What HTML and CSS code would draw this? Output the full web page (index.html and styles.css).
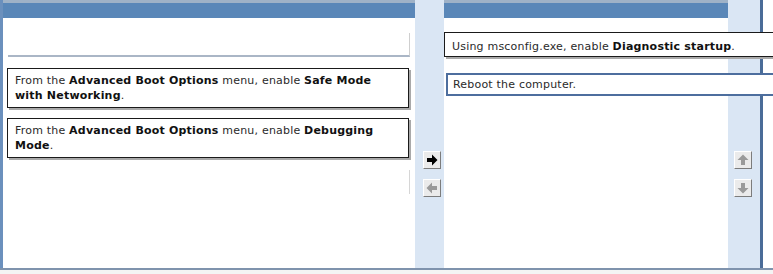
FILE: index.html
```html
<!DOCTYPE html>
<html>
<head>
<meta charset="utf-8">
<link rel="stylesheet" href="styles.css">
</head>
<body>
<div class="app">
  <div class="pane pane-left">
    <div class="head"></div>
    <div class="list">
      <div class="item item-empty"></div>
      <div class="item">From the <b>Advanced Boot Options</b> menu, enable <b>Safe Mode</b> <b>with Networking</b>.</div>
      <div class="item">From the <b>Advanced Boot Options</b> menu, enable <b>Debugging</b> <b>Mode</b>.</div>
      <div class="ghost"></div>
    </div>
  </div>
  <div class="gutter gutter-mid">
    <button class="btn" aria-label="Add">
      <svg width="12" height="12" viewBox="0 0 12 12"><polygon points="1,4 6,4 6,0.5 11.5,6 6,11.5 6,8 1,8" fill="#000"/></svg>
    </button>
    <button class="btn" aria-label="Remove">
      <svg width="12" height="12" viewBox="0 0 12 12"><polygon points="11,4 6,4 6,0.5 0.5,6 6,11.5 6,8 11,8" fill="#9a9a9a"/></svg>
    </button>
  </div>
  <div class="pane pane-right">
    <div class="head"></div>
    <div class="list list-right">
      <div class="item item-wide">Using msconfig.exe, enable <b>Diagnostic startup</b>.</div>
      <div class="item item-wide item-selected">Reboot the computer.</div>
    </div>
  </div>
  <div class="gutter gutter-right">
    <button class="btn" aria-label="Move up">
      <svg width="12" height="12" viewBox="0 0 12 12"><polygon points="6,0.5 11.5,6 8,6 8,11 4,11 4,6 0.5,6" fill="#9a9a9a"/></svg>
    </button>
    <button class="btn" aria-label="Move down">
      <svg width="12" height="12" viewBox="0 0 12 12"><polygon points="6,11.5 11.5,6 8,6 8,1 4,1 4,6 0.5,6" fill="#9a9a9a"/></svg>
    </button>
  </div>
  <div class="edge"></div>
</div>
</body>
</html>
```

FILE: styles.css
```css
html, body {
  margin: 0;
  padding: 0;
  background: #f4f4f4;
}

body {
  font-family: "DejaVu Sans", Verdana, sans-serif;
  font-size: 11px;
  letter-spacing: 0.2px;
  color: #2a2a2a;
  overflow: hidden;
}

.app {
  display: flex;
  width: 773px;
  height: 268px;
  border-bottom: 2px solid #7f93ad;
  background: #fff;
  overflow: hidden;
}

.pane {
  display: flex;
  flex-direction: column;
  background: #fff;
}

.pane-left {
  width: 412px;
  border-left: 3px solid #6b90bd;
}

.pane-right {
  width: 284px;
  flex: none;
  position: relative;
  z-index: 1;
}

.head {
  height: 15px;
  border-top: 3px solid #9fb2c7;
  background: #5a87b8;
  flex: none;
}

.list {
  display: flex;
  flex-direction: column;
  padding: 15px 0 0 4px;
}

.item {
  width: 386px;
  padding: 4px 7px 4px 7px;
  line-height: 15px;
  border: 1px solid #1a1a1a;
  box-shadow: 2px 2px 0 #a9a9a9;
  background: #fff;
  margin-bottom: 10px;
}

.item b {
  font-weight: bold;
  color: #111;
}

.item-empty {
  height: 22px;
  padding: 0;
  width: 401px;
  border: none;
  border-right: 1px solid #cfcfcf;
  border-bottom: 2px solid #aab6c6;
  box-shadow: none;
  margin-bottom: 11px;
  margin-left: 1px;
}

.ghost {
  width: 402px;
  height: 24px;
  margin-top: 2px;
  border-right: 1px solid #d6d6d6;
}

.list-right {
  padding: 14px 0 0 0;
}

.item-wide {
  width: 360px;
  padding: 6px 7px 2px 7px;
  flex: none;
  border-right: none;
  margin-bottom: 16px;
}

.item-selected {
  margin-left: 2px;
  padding: 2px 5px 2px 5px;
  border: 2px solid #4d6e9e;
  border-right: none;
  box-shadow: none;
}

.gutter {
  flex: none;
  background: #dae6f4;
  display: flex;
  flex-direction: column;
  gap: 10px;
  padding-top: 151px;
  box-sizing: border-box;
}

.gutter-mid {
  width: 29px;
  padding-left: 8px;
}

.gutter-right {
  width: 32px;
  padding-left: 6px;
}

.btn {
  width: 18px;
  height: 18px;
  padding: 0;
  margin: 0;
  background: #ebebeb;
  border: 1px solid;
  border-color: #ffffff #7c7c7c #7c7c7c #ffffff;
  display: flex;
  align-items: center;
  justify-content: center;
  box-sizing: border-box;
}

.btn svg {
  display: block;
}

.edge {
  flex: none;
  width: 3px;
  background: #4a6c98;
}
```
